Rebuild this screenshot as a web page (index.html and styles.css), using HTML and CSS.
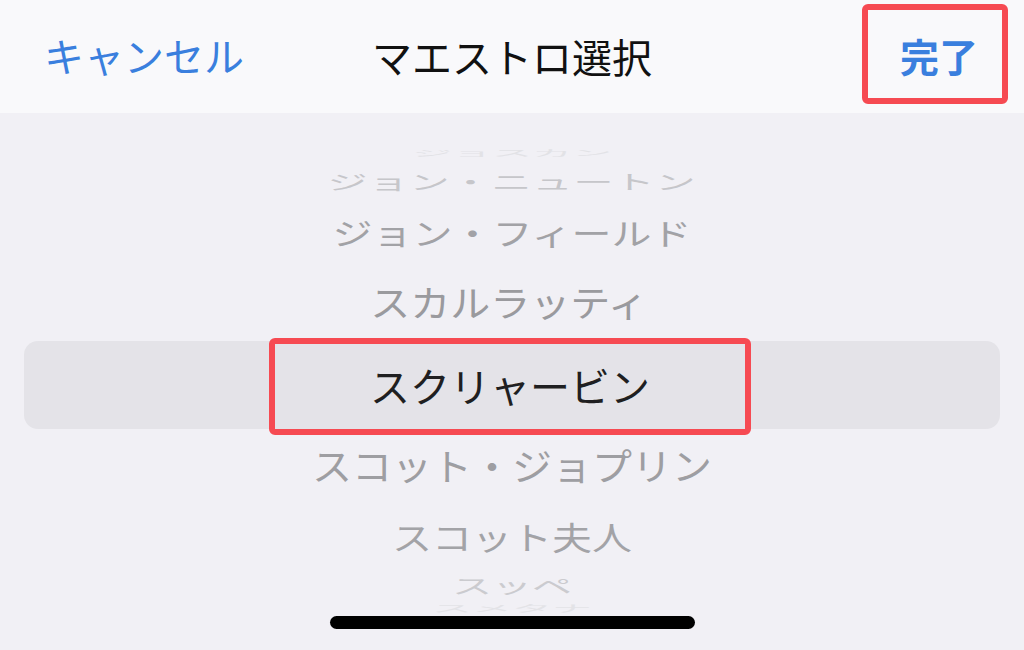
FILE: index.html
```html
<!DOCTYPE html>
<html lang="ja">
<head>
<meta charset="utf-8">
<title>マエストロ選択</title>
<link rel="stylesheet" href="styles.css">
</head>
<body>
<div class="screen">
  <header class="navbar">
    <div class="nav-left"><span class="nav-btn">キャンセル</span></div>
    <div class="nav-title">マエストロ選択</div>
    <div class="nav-right"><span class="nav-btn done">完了</span></div>
  </header>
  <main class="picker">
    <div class="row r0"><span class="label">ジョスカン</span></div>
    <div class="row r1"><span class="label">ジョン・ニュートン</span></div>
    <div class="row r2"><span class="label">ジョン・フィールド</span></div>
    <div class="row r3"><span class="label">スカルラッティ</span></div>
    <div class="row selected"><span class="label">スクリャービン</span></div>
    <div class="row r5"><span class="label">スコット・ジョプリン</span></div>
    <div class="row r6"><span class="label">スコット夫人</span></div>
    <div class="row r7"><span class="label">スッペ</span></div>
    <div class="row r8"><span class="label">スメタナ</span></div>
    <div class="home-indicator"></div>
  </main>
</div>
</body>
</html>
```

FILE: styles.css
```css
*, *::before, *::after { box-sizing: border-box; }
html, body {
  margin: 0;
  padding: 0;
  width: 1024px;
  height: 650px;
  overflow: hidden;
  font-family: "Noto Sans CJK JP", "Noto Sans", sans-serif;
}
.screen {
  width: 1024px;
  height: 650px;
  display: flex;
  flex-direction: column;
  background: #f1f0f5;
}
.navbar {
  height: 113px;
  flex: none;
  background: #f9f9fb;
  display: grid;
  grid-template-columns: 1fr auto 1fr;
  align-items: center;
  padding: 0 46px 2px 44px;
}
.nav-left { justify-self: start; }
.nav-right { justify-self: end; }
.nav-btn {
  color: #3a7fde;
  font-size: 40px;
  line-height: 40px;
  display: inline-block;
  position: relative;
}
.nav-title {
  font-size: 40px;
  line-height: 40px;
  color: #111;
  margin-left: 2px;
}
.done {
  font-weight: 700;
  font-size: 39px;
}
.done::after {
  content: "";
  position: absolute;
  left: -38px;
  right: -30px;
  top: -31px;
  bottom: -29px;
  border: 6px solid #f64a52;
  border-radius: 6px;
}
.picker {
  flex: 1;
  position: relative;
  display: flex;
  flex-direction: column;
  padding-top: 34px;
  overflow: hidden;
}
.row {
  flex: none;
  display: flex;
  align-items: center;
  justify-content: center;
  margin: 0 24px;
  overflow: visible;
}
.label {
  font-size: 40px;
  line-height: 40px;
  white-space: nowrap;
  display: inline-block;
  color: #9c9ca0;
}
.r0 { height: 12px; }
.r0 .label { transform: scaleY(0.2); color: #e2e2e6; }
.r1 { height: 44px; }
.r1 .label { transform: scaleY(0.5); color: #c6c6ca; letter-spacing: 1px; }
.r2 { height: 58px; }
.r2 .label { transform: scaleY(0.76); color: #a2a2a6; }
.r3 { height: 80px; }
.r3 .label { transform: scaleY(0.92); color: #9a9a9e; margin-left: -6px; }
.selected {
  height: 88px;
  background: #e4e3e8;
  border-radius: 14px;
  position: relative;
}
.selected .label { color: #1f1f21; margin-left: -4px; }
.selected::after {
  content: "";
  position: absolute;
  left: 245px;
  top: -3px;
  width: 482px;
  height: 97px;
  border: 6px solid #f64a52;
  border-radius: 6px;
}
.r5 { height: 72px; }
.r5 .label { transform: scaleY(0.93); color: #9e9ea2; }
.r6 { height: 70px; }
.r6 .label { transform: scaleY(0.8); color: #a3a3a7; }
.r7 { height: 28px; }
.r7 .label { transform: scaleY(0.5); color: #cbcbcf; }
.r8 { height: 18px; }
.r8 .label { transform: scaleY(0.22); color: #e3e3e7; }
.home-indicator {
  position: absolute;
  left: 330px;
  width: 365px;
  bottom: 21px;
  height: 13px;
  border-radius: 7px;
  background: #000;
}
```
